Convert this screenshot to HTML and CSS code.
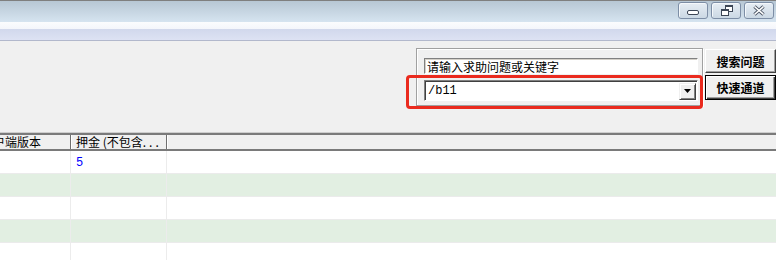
FILE: index.html
```html
<!DOCTYPE html>
<html lang="zh">
<head>
    <meta charset="UTF-8">
    <title>帮助</title>
    <link rel="stylesheet" href="styles.css">
</head>
<body>
    <div class="titlebar">
        <div class="caption-buttons">
            <button class="cap-btn" title="最小化">
                <svg width="30" height="17" viewBox="0 0 30 17">
                    <rect x="9.5" y="8.5" width="11" height="4" rx="1.5" fill="#fff" stroke="#3c4656"/>
                </svg>
            </button>
            <button class="cap-btn" title="还原">
                <svg width="30" height="17" viewBox="0 0 30 17">
                    <rect x="14.5" y="3.5" width="7" height="6" fill="#fff" stroke="#3c4656"/>
                    <line x1="14.5" y1="4.5" x2="21.5" y2="4.5" stroke="#3c4656"/>
                    <rect x="10.5" y="7.5" width="7" height="6" fill="#fff" stroke="#3c4656"/>
                    <line x1="10.5" y1="8.5" x2="17.5" y2="8.5" stroke="#3c4656"/>
                </svg>
            </button>
            <button class="cap-btn" title="关闭">
                <svg width="30" height="17" viewBox="0 0 30 17">
                    <path d="M10.5 4.5 L19.5 12.5 M19.5 4.5 L10.5 12.5" stroke="#4a5464" stroke-width="3.4"/>
                    <path d="M10.5 4.5 L19.5 12.5 M19.5 4.5 L10.5 12.5" stroke="#fff" stroke-width="1.6"/>
                </svg>
            </button>
        </div>
    </div>
    <div class="menubar"></div>

    <div class="toolbar">
        <div class="search-panel">
            <input class="search-input" type="text" value="请输入求助问题或关键字">
            <div class="combo">
                <span class="combo-text">/b11</span>
                <span class="combo-arrow">
                    <svg width="7" height="4" viewBox="0 0 7 4"><path d="M0 0 H7 L3.5 4 Z" fill="#000"/></svg>
                </span>
            </div>
            <div class="mark"></div>
        </div>
        <div class="search-buttons">
            <button class="btn">搜索问题</button>
            <button class="btn btn-default">快速通道</button>
        </div>
    </div>

    <div class="grid">
        <div class="grid-row grid-head">
            <div class="cell col-1">客户端版本</div>
            <div class="cell col-2">押金 (不包含<span class="dots">...</span></div>
            <div class="cell col-3"></div>
        </div>
        <div class="grid-row">
            <div class="cell col-1"></div>
            <div class="cell col-2 num">5</div>
            <div class="cell col-3"></div>
        </div>
        <div class="grid-row alt">
            <div class="cell col-1"></div>
            <div class="cell col-2"></div>
            <div class="cell col-3"></div>
        </div>
        <div class="grid-row">
            <div class="cell col-1"></div>
            <div class="cell col-2"></div>
            <div class="cell col-3"></div>
        </div>
        <div class="grid-row alt">
            <div class="cell col-1"></div>
            <div class="cell col-2"></div>
            <div class="cell col-3"></div>
        </div>
        <div class="grid-row">
            <div class="cell col-1"></div>
            <div class="cell col-2"></div>
            <div class="cell col-3"></div>
        </div>
    </div>
</body>
</html>
```

FILE: styles.css
```css
body {
    margin: 0;
    background-color: #f0f0f0;
    font-family: "Noto Sans CJK SC", "Liberation Sans", sans-serif;
    font-size: 12px;
    color: #000;
    overflow: hidden;
}
.titlebar {
    height: 21px;
    border-top: 1px solid #7f7f7f;
    background: linear-gradient(#b7c7d4, #d6e4f0);
    display: flex;
    justify-content: flex-end;
}
.caption-buttons {
    display: flex;
    gap: 3px;
    padding: 1px 2px 0 0;
}
.cap-btn {
    width: 30px;
    height: 17px;
    padding: 0;
    border: 1px solid #7d8ea6;
    border-radius: 3px;
    background: linear-gradient(#e6edf4, #cbd8e4);
    box-shadow: inset 1px 1px 0 #f4f8fb;
    display: flex;
    align-items: center;
    justify-content: center;
}
.cap-btn svg {
    display: block;
    margin: -1px;
}
.menubar {
    height: 18px;
    border-bottom: 1px solid #b2b8cc;
    background: linear-gradient(#fbfcfe 0, #f4f6fb 7px, #d1d8ec 7px, #dde2f3 100%);
}
.toolbar {
    height: 84px;
    padding-top: 7px;
    border-bottom: 1px solid #cdcdcd;
    display: flex;
    justify-content: flex-end;
    align-items: flex-start;
}
.search-panel {
    position: relative;
    width: 287px;
    height: 58px;
    box-sizing: border-box;
    padding: 9px 4px 0 7px;
    border: 1px solid #a0a0a0;
    box-shadow: inset 1px 1px 0 #fff, 1px 1px 0 #fff;
}
.search-input {
    display: block;
    box-sizing: border-box;
    width: 274px;
    height: 16px;
    margin: 0;
    padding: 0 0 0 2px;
    border: 1px solid;
    border-color: #808080 #fff #fff #808080;
    box-shadow: inset 1px 1px 0 #d4d0c8;
    background: #fff;
    font-family: "Noto Sans CJK SC", sans-serif;
    font-size: 12px;
    line-height: 14px;
    color: #000;
    outline: none;
}
.combo {
    box-sizing: border-box;
    width: 274px;
    height: 21px;
    margin-top: 6px;
    border: 1px solid;
    border-color: #808080 #fff #fff #808080;
    box-shadow: inset 1px 1px 0 #404040;
    background: #fff;
    display: flex;
    align-items: center;
    justify-content: space-between;
    padding: 0 1px 0 3px;
}
.combo-text {
    font-family: "Liberation Mono", monospace;
    font-size: 12px;
}
.combo-arrow {
    box-sizing: border-box;
    width: 17px;
    height: 17px;
    margin-top: 1px;
    background: #f0f0f0;
    border: 1px solid;
    border-color: #f0f0f0 #404040 #404040 #f0f0f0;
    box-shadow: inset 1px 1px 0 #fff, inset -1px -1px 0 #808080;
    display: flex;
    align-items: center;
    justify-content: center;
}
.mark {
    position: absolute;
    left: -11px;
    top: 26px;
    width: 297px;
    height: 34px;
    box-sizing: border-box;
    border: 3px solid #ea2a1e;
    border-radius: 4px;
}
.search-buttons {
    width: 71px;
    margin-left: 2px;
    display: flex;
    flex-direction: column;
    gap: 2px;
    padding-top: 1px;
}
.btn {
    height: 24px;
    padding: 0;
    background-color: #f0f0f0;
    border: 1px solid;
    border-color: #fff #404040 #404040 #fff;
    box-shadow: inset -1px -1px 0 #a0a0a0;
    font-family: "Noto Sans CJK SC", sans-serif;
    font-size: 12px;
    font-weight: bold;
    color: #000;
}
.btn-default {
    height: 25px;
    border: 1px solid #000;
    box-shadow: inset 1px 1px 0 #fff, inset -1px -1px 0 #404040, inset -2px -2px 0 #a0a0a0;
}
.grid {
    background: #fff;
}
.grid-row {
    display: flex;
    height: 22px;
    border-bottom: 1px solid #ebebeb;
}
.grid-row.alt {
    background-color: #e2efe2;
}
.cell {
    box-sizing: border-box;
    border-right: 1px solid #ececec;
    line-height: 22px;
    white-space: nowrap;
    overflow: hidden;
}
.col-1 {
    width: 101px;
    margin-left: -30px;
    padding-left: 11px;
}
.col-2 {
    width: 96px;
    padding-left: 5px;
}
.col-3 {
    flex: 1;
    border-right: none;
}
.num {
    color: #0000ff;
    font-family: "Liberation Mono", monospace;
    line-height: 24px;
}
.dots {
    letter-spacing: 3px;
}
.grid-head {
    height: 14px;
    background-color: #f0f0f0;
    border-top: 2px solid #7a7a7a;
    border-bottom: 2px solid #7a7a7a;
}
.grid-head .cell {
    line-height: 14px;
    overflow: visible;
    border-right: 1px solid #6f6f6f;
    box-shadow: 1px 0 0 #fff;
}
.grid-head .col-3 {
    border-right: none;
    border-left: 1px solid #fff;
}
```
